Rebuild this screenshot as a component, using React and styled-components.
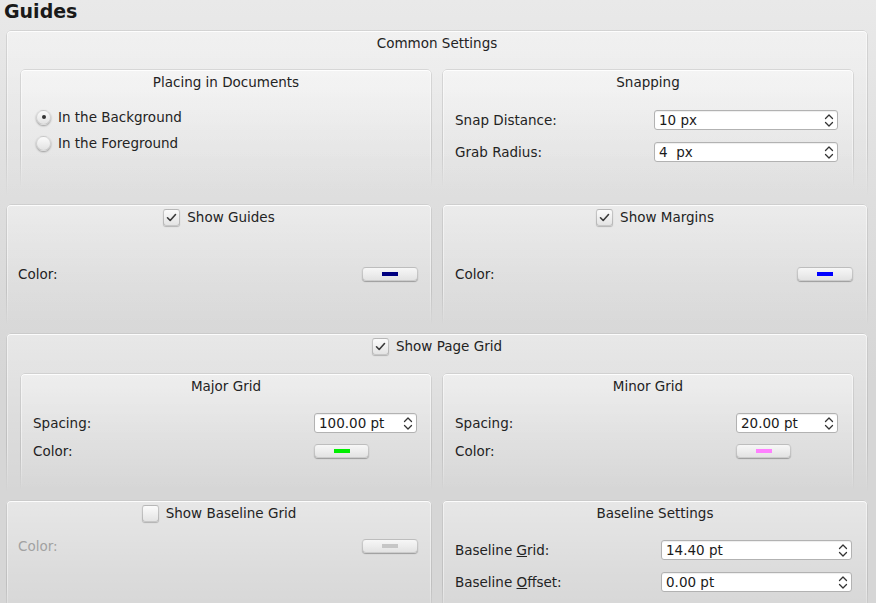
import React from "react";
import styled, { createGlobalStyle } from "styled-components";

const GlobalStyle = createGlobalStyle`
  html, body {
    margin: 0;
    padding: 0;
  }
  body {
    font-family: "DejaVu Sans", "Noto Sans", sans-serif;
    font-size: 13.5px;
    color: #232323;
    background: #d6d6d6;
  }
`;

const Page = styled.div`
  width: 876px;
  height: 603px;
  overflow: hidden;
  box-sizing: border-box;
  padding: 0 8px 0 6px;
  background: linear-gradient(
    to bottom,
    #e9e9e9 0,
    #dedede 200px,
    #d6d6d6 380px,
    #d6d6d6 100%
  );
  display: flex;
  flex-direction: column;
`;

const Heading = styled.h1`
  flex: none;
  margin: 0 0 0 -2px;
  height: 30px;
  font-size: 19px;
  line-height: 22px;
  font-weight: bold;
  color: #1a1a1a;
`;

const Stack = styled.div`
  flex: none;
  display: flex;
  flex-direction: column;
  gap: 8px;
`;

const Columns = styled.div`
  flex: none;
  display: grid;
  grid-template-columns: 1fr 1fr;
  gap: 10px;
  padding: ${(p) => p.$pad || "0"};
`;

const Group = styled.section`
  position: relative;
  flex: none;
  box-sizing: border-box;
  height: ${(p) => p.$h}px;
  border-radius: 5px 5px 0 0;
  background: linear-gradient(
    to bottom,
    rgba(255, 255, 255, 0.42),
    rgba(255, 255, 255, 0.14) 60%,
    rgba(255, 255, 255, 0)
  );

  &::before {
    content: "";
    position: absolute;
    inset: 0;
    border-radius: inherit;
    border: 1px solid rgba(0, 0, 0, 0.12);
    border-bottom: none;
    box-shadow: inset 0 1px 0 rgba(255, 255, 255, 0.85),
      inset 1px 0 0 rgba(255, 255, 255, 0.45),
      inset -1px 0 0 rgba(255, 255, 255, 0.45);
    -webkit-mask-image: linear-gradient(to bottom, #000 70%, transparent);
    mask-image: linear-gradient(to bottom, #000 70%, transparent);
    pointer-events: none;
  }
`;

const GroupTitle = styled.div`
  display: flex;
  justify-content: center;
  align-items: center;
  gap: 7px;
  padding-top: 5px;
  height: 16px;
  line-height: 16px;
`;

const Form = styled.div`
  display: grid;
  grid-template-columns: 1fr ${(p) => p.$col}px;
  row-gap: ${(p) => p.$gap || 0}px;
  align-items: center;
  padding: ${(p) => p.$top}px ${(p) => p.$right}px 0 ${(p) => p.$left}px;
`;

const Label = styled.span`
  line-height: 20px;
  color: ${(p) => (p.$disabled ? "#a2a2a2" : "inherit")};
`;

const SpinFrame = styled.div`
  box-sizing: border-box;
  height: 20px;
  background: #fff;
  border: 1px solid #b2b2b2;
  border-radius: 3px;
  box-shadow: inset 0 1px 1px rgba(0, 0, 0, 0.07);
  display: flex;
  align-items: center;
  justify-content: space-between;
  padding: 0 3px 0 4px;
  color: #1a1a1a;
  white-space: pre;
`;

const ColorButton = styled.div`
  box-sizing: border-box;
  justify-self: ${(p) => (p.$start ? "start" : "stretch")};
  width: ${(p) => (p.$w ? `${p.$w}px` : "auto")};
  height: 14px;
  border-radius: 4px;
  border: 1px solid rgba(0, 0, 0, 0.17);
  background: linear-gradient(to bottom, #f7f7f7, #e3e3e3);
  box-shadow: 0 1px 1px rgba(0, 0, 0, 0.3);
  display: flex;
  align-items: center;
  justify-content: center;
`;

const Swatch = styled.span`
  width: 16px;
  height: 4px;
  background: ${(p) => p.$color};
`;

const RadioList = styled.div`
  padding: 14px 16px 0;
  display: flex;
  flex-direction: column;
`;

const RadioRow = styled.label`
  height: 26px;
  display: flex;
  align-items: center;
  gap: 7px;
`;

const RadioDot = styled.span`
  box-sizing: border-box;
  width: 15px;
  height: 15px;
  border-radius: 50%;
  background: linear-gradient(to bottom, #fbfbfb, #e2e2e2);
  border: 1px solid rgba(0, 0, 0, 0.12);
  box-shadow: 0 1px 2px rgba(0, 0, 0, 0.35);
  display: flex;
  align-items: center;
  justify-content: center;

  &::after {
    content: "";
    width: 4px;
    height: 4px;
    border-radius: 50%;
    background: ${(p) => (p.$checked ? "#333" : "transparent")};
  }
`;

const CheckBox = styled.span`
  box-sizing: border-box;
  width: 17px;
  height: 17px;
  border-radius: 3px;
  border: 1px solid rgba(0, 0, 0, 0.2);
  background: linear-gradient(to bottom, #fbfbfb, #e4e4e4);
  box-shadow: 0 1px 1px rgba(0, 0, 0, 0.22);
  display: flex;
  align-items: center;
  justify-content: center;
`;

function Check({ checked }) {
  return (
    <CheckBox>
      {checked && (
        <svg width="13" height="13" viewBox="0 0 13 13">
          <path
            d="M2.5 6.8 L5.2 9.5 L10.5 3.5"
            fill="none"
            stroke="#3a3a3a"
            strokeWidth="1.6"
            strokeLinecap="round"
            strokeLinejoin="round"
          />
        </svg>
      )}
    </CheckBox>
  );
}

function SpinBox({ value }) {
  return (
    <SpinFrame>
      <span>{value}</span>
      <svg width="10" height="15" viewBox="0 0 10 15">
        <path
          d="M1.5 5.5 L5 2 L8.5 5.5 M1.5 9.5 L5 13 L8.5 9.5"
          fill="none"
          stroke="#333"
          strokeWidth="1.3"
          strokeLinecap="round"
          strokeLinejoin="round"
        />
      </svg>
    </SpinFrame>
  );
}

function ColorPick({ color, width, start }) {
  return (
    <ColorButton $w={width} $start={start}>
      <Swatch $color={color} />
    </ColorButton>
  );
}

export default function App() {
  return (
    <>
      <GlobalStyle />
      <Page>
        <Heading>Guides</Heading>
        <Stack>
          <Group $h={166}>
            <GroupTitle>Common Settings</GroupTitle>
            <Columns $pad="18px 14px 0">
              <Group $h={118}>
                <GroupTitle>Placing in Documents</GroupTitle>
                <RadioList>
                  <RadioRow>
                    <RadioDot $checked />
                    In the Background
                  </RadioRow>
                  <RadioRow>
                    <RadioDot />
                    In the Foreground
                  </RadioRow>
                </RadioList>
              </Group>
              <Group $h={118}>
                <GroupTitle>Snapping</GroupTitle>
                <Form $col={184} $gap={12} $top={20} $left={13} $right={16}>
                  <Label>Snap Distance:</Label>
                  <SpinBox value="10 px" />
                  <Label>Grab Radius:</Label>
                  <SpinBox value="4  px" />
                </Form>
              </Group>
            </Columns>
          </Group>

          <Columns>
            <Group $h={121}>
              <GroupTitle>
                <Check checked />
                Show Guides
              </GroupTitle>
              <Form $col={56} $top={39} $left={12} $right={14}>
                <Label>Color:</Label>
                <ColorPick color="#000080" />
              </Form>
            </Group>
            <Group $h={121}>
              <GroupTitle>
                <Check checked />
                Show Margins
              </GroupTitle>
              <Form $col={56} $top={39} $left={13} $right={15}>
                <Label>Color:</Label>
                <ColorPick color="#0000ff" />
              </Form>
            </Group>
          </Columns>

          <Group $h={159}>
            <GroupTitle>
              <Check checked />
              Show Page Grid
            </GroupTitle>
            <Columns $pad="19px 14px 0">
              <Group $h={117}>
                <GroupTitle>Major Grid</GroupTitle>
                <Form $col={103} $gap={8} $top={19} $left={13} $right={15}>
                  <Label>Spacing:</Label>
                  <SpinBox value="100.00 pt" />
                  <Label>Color:</Label>
                  <ColorPick color="#00ee00" width={55} start />
                </Form>
              </Group>
              <Group $h={117}>
                <GroupTitle>Minor Grid</GroupTitle>
                <Form $col={102} $gap={8} $top={19} $left={13} $right={16}>
                  <Label>Spacing:</Label>
                  <SpinBox value="20.00 pt" />
                  <Label>Color:</Label>
                  <ColorPick color="#ff80ff" width={55} start />
                </Form>
              </Group>
            </Columns>
          </Group>

          <Columns>
            <Group $h={120}>
              <GroupTitle>
                <Check />
                Show Baseline Grid
              </GroupTitle>
              <Form $col={56} $top={15} $left={12} $right={14}>
                <Label $disabled>Color:</Label>
                <ColorPick color="#c6c6c6" />
              </Form>
            </Group>
            <Group $h={120}>
              <GroupTitle>Baseline Settings</GroupTitle>
              <Form $col={191} $gap={12} $top={19} $left={13} $right={16}>
                <Label>
                  Baseline <u>G</u>rid:
                </Label>
                <SpinBox value="14.40 pt" />
                <Label>
                  Baseline <u>O</u>ffset:
                </Label>
                <SpinBox value="0.00 pt" />
              </Form>
            </Group>
          </Columns>
        </Stack>
      </Page>
    </>
  );
}
